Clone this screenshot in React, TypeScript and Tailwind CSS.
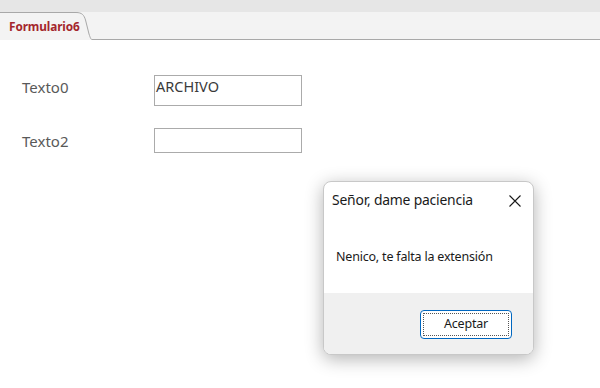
import React from "react";

export default function App() {
  return (
    <div className="relative w-[600px] h-[388px] bg-white overflow-hidden" style={{ fontFamily: '"Noto Sans", "Open Sans", sans-serif' }}>
      <div className="h-[12px] bg-[#e6e6e6]" />
      <div className="flex h-[28px] bg-[#f3f3f3]">
        <div className="relative w-[92px] h-full">
          <svg className="absolute inset-0" width="92" height="28" viewBox="0 0 92 28">
            <path d="M0 0.5 H76 C82 0.5 84 3 85.5 8 L89 22 C90.5 26.5 91 27.5 92 27.5" fill="none" stroke="#a8a8a8" strokeWidth="1" />
          </svg>
          <span className="absolute left-[9px] top-[6px] text-[11.8px] font-bold text-[#a4262c] tracking-[-0.1px] leading-[16px]">Formulario6</span>
        </div>
        <div className="flex-1 border-b border-[#a8a8a8]" />
      </div>
      <div className="flex flex-col pl-[22px] pt-[35px] gap-[22px]">
        <div className="flex items-start">
          <span className="w-[132px] pt-[2px] text-[15px] leading-[20px] text-[#595959]">Texto0</span>
          <div className="w-[148px] h-[31px] border border-[#ababab] px-[1px] text-[14.5px] leading-[20px] text-[#3a3a3a]">ARCHIVO</div>
        </div>
        <div className="flex items-center">
          <span className="w-[132px] text-[15px] leading-[20px] text-[#595959]">Texto2</span>
          <div className="w-[148px] h-[25px] border border-[#ababab]" />
        </div>
      </div>

      <div className="absolute left-[323px] top-[181px] w-[211px] h-[174px] rounded-[8px] border border-[#c8c8c8] bg-white shadow-[0_4px_18px_rgba(0,0,0,0.3)] overflow-hidden flex flex-col">
        <div className="flex items-center justify-between h-[36px] pl-[8px] pr-[12px] pt-[1px]">
          <span className="text-[13.9px] text-[#1a1a1a] tracking-[-0.2px]">Señor, dame paciencia</span>
          <svg width="12" height="12" viewBox="0 0 12 12">
            <path d="M0.5 0.5 L11.5 11.5 M11.5 0.5 L0.5 11.5" stroke="#1a1a1a" strokeWidth="1.1" />
          </svg>
        </div>
        <div className="flex-1 pl-[12px] pt-[30px] text-[12.5px] text-[#1a1a1a] tracking-[-0.2px]">Nenico, te falta la extensión</div>
        <div className="h-[61px] bg-[#f0f0f0] flex justify-end items-start pt-[17px] pr-[21px]">
          <div className="w-[92px] h-[29px] rounded-[4px] border border-[#0067c0] bg-white p-[2px]">
            <div className="w-full h-full border border-dotted border-[#555] flex items-center justify-center text-[12.5px] text-[#1a1a1a] tracking-[-0.2px]">Aceptar</div>
          </div>
        </div>
      </div>
    </div>
  );
}
